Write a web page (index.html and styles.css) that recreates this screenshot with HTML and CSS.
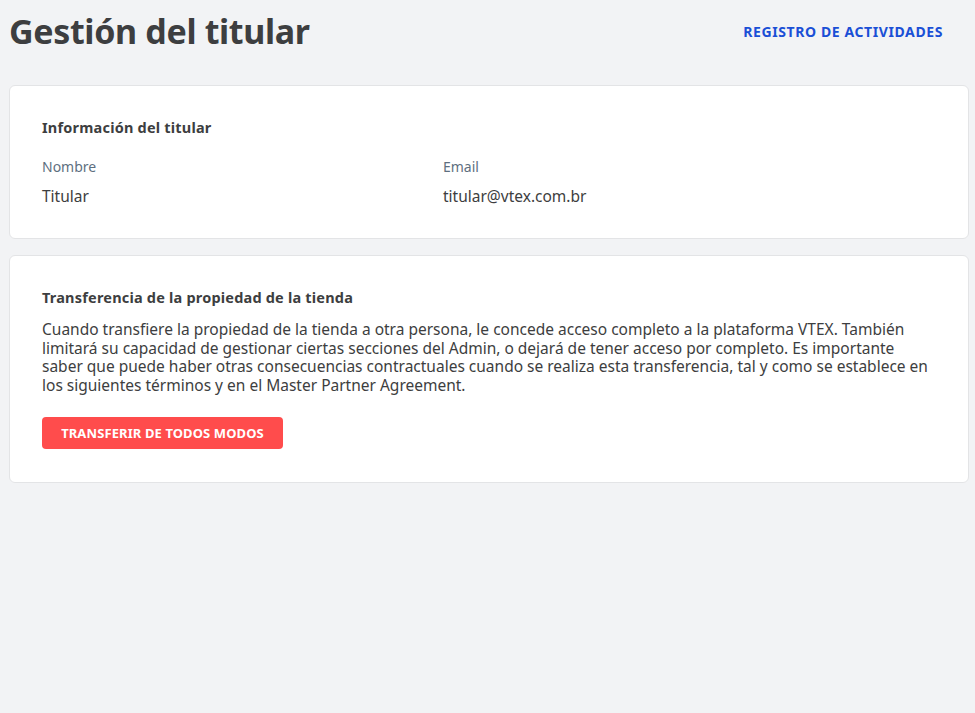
FILE: index.html
```html
<!DOCTYPE html>
<html lang="es">
<head>
<meta charset="utf-8">
<title>Gestión del titular</title>
<link rel="stylesheet" href="styles.css">
</head>
<body>
<div class="page">
  <header class="page-header">
    <h1 class="page-title">Gestión del titular</h1>
    <a class="header-link" href="#">REGISTRO DE ACTIVIDADES</a>
  </header>
  <section class="card">
    <h2 class="card-title">Información del titular</h2>
    <div class="info-grid">
      <div class="info-item">
        <div class="info-label">Nombre</div>
        <div class="info-value">Titular</div>
      </div>
      <div class="info-item">
        <div class="info-label">Email</div>
        <div class="info-value">titular@vtex.com.br</div>
      </div>
    </div>
  </section>
  <section class="card card-transfer">
    <h2 class="card-title">Transferencia de la propiedad de la tienda</h2>
    <p class="card-text">Cuando transfiere la propiedad de la tienda a otra persona, le concede acceso completo a la plataforma VTEX. También limitará su capacidad de gestionar ciertas secciones del Admin, o dejará de tener acceso por completo. Es importante saber que puede haber otras consecuencias contractuales cuando se realiza esta transferencia, tal y como se establece en los siguientes términos y en el Master Partner Agreement.</p>
    <button class="btn-danger" type="button">TRANSFERIR DE TODOS MODOS</button>
  </section>
</div>
</body>
</html>
```
FILE: styles.css
```css
html, body {
  margin: 0;
  padding: 0;
  background: #f2f3f5;
}
body {
  font-family: "Noto Sans", "Open Sans", sans-serif;
  color: #3d3e40;
}
.page {
  padding: 0 6px 0 9px;
}
.page-header {
  display: flex;
  align-items: center;
  justify-content: space-between;
  height: 62px;
  padding-right: 26px;
  padding-bottom: 2px;
}
.page-title {
  margin: 0;
  font-size: 34px;
  font-weight: 700;
  color: #3d3e40;
  letter-spacing: -0.35px;
}
.header-link {
  font-size: 14px;
  font-weight: 700;
  color: #1a4fd6;
  text-decoration: none;
  letter-spacing: 0.6px;
  margin-top: 0;
}
.card {
  margin-top: 21px;
  background: #ffffff;
  border: 1px solid #e3e4e6;
  border-radius: 6px;
  padding: 31px 32px 32px 32px;
}
.card-transfer {
  margin-top: 16px;
  padding-bottom: 33px;
}
.card-title {
  margin: 0;
  font-size: 14.5px;
  font-weight: 700;
  color: #3d3e40;
  line-height: 20px;
  letter-spacing: 0.2px;
}
.info-grid {
  display: grid;
  grid-template-columns: 401px 1fr;
  margin-top: 20px;
}
.info-label {
  font-size: 14px;
  color: #5e6f80;
  line-height: 20px;
}
.info-value {
  margin-top: 9px;
  font-size: 15.5px;
  color: #3d3e40;
  line-height: 20px;
}
.card-text {
  margin: 13px 0 0 0;
  font-size: 15.5px;
  line-height: 18.5px;
  color: #3d3e40;
}
.btn-danger {
  margin-top: 23px;
  height: 32px;
  width: 241px;
  border: none;
  border-radius: 4px;
  background: #ff4c4c;
  color: #ffffff;
  font-family: inherit;
  font-size: 13px;
  font-weight: 700;
  letter-spacing: 0.1px;
  cursor: pointer;
}
```
